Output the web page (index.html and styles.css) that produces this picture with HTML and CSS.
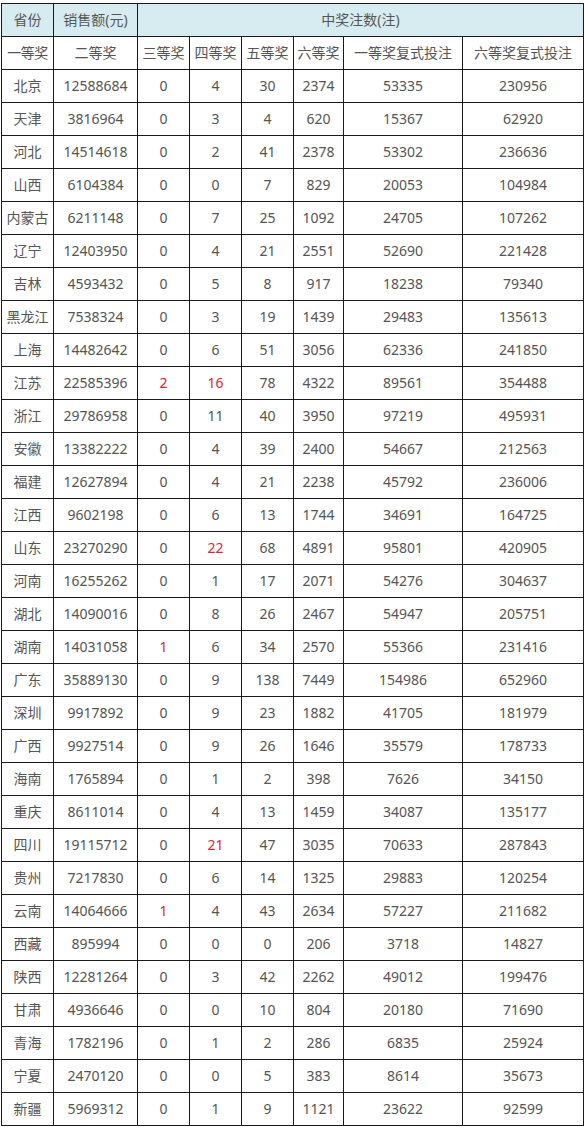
FILE: index.html
```html
<!DOCTYPE html>
<html lang="zh-CN">
<head>
<meta charset="utf-8">
<title>中奖注数</title>
<link rel="stylesheet" href="styles.css">
</head>
<body>
<table class="prize-table">
  <colgroup>
    <col class="c1"><col class="c2"><col class="c3"><col class="c4"><col class="c5"><col class="c6"><col class="c7"><col class="c8">
  </colgroup>
  <thead>
    <tr class="head-main">
      <th>省份</th><th>销售额(元)</th><th colspan="6">中奖注数(注)</th>
    </tr>
    <tr class="head-sub">
      <th class="tight">一等奖</th><th>二等奖</th><th>三等奖</th><th>四等奖</th><th>五等奖</th><th>六等奖</th><th>一等奖复式投注</th><th>六等奖复式投注</th>
    </tr>
  </thead>
  <tbody>
    <tr><td>北京</td><td>12588684</td><td>0</td><td>4</td><td>30</td><td>2374</td><td>53335</td><td>230956</td></tr>
    <tr><td>天津</td><td>3816964</td><td>0</td><td>3</td><td>4</td><td>620</td><td>15367</td><td>62920</td></tr>
    <tr><td>河北</td><td>14514618</td><td>0</td><td>2</td><td>41</td><td>2378</td><td>53302</td><td>236636</td></tr>
    <tr><td>山西</td><td>6104384</td><td>0</td><td>0</td><td>7</td><td>829</td><td>20053</td><td>104984</td></tr>
    <tr><td>内蒙古</td><td>6211148</td><td>0</td><td>7</td><td>25</td><td>1092</td><td>24705</td><td>107262</td></tr>
    <tr><td>辽宁</td><td>12403950</td><td>0</td><td>4</td><td>21</td><td>2551</td><td>52690</td><td>221428</td></tr>
    <tr><td>吉林</td><td>4593432</td><td>0</td><td>5</td><td>8</td><td>917</td><td>18238</td><td>79340</td></tr>
    <tr><td>黑龙江</td><td>7538324</td><td>0</td><td>3</td><td>19</td><td>1439</td><td>29483</td><td>135613</td></tr>
    <tr><td>上海</td><td>14482642</td><td>0</td><td>6</td><td>51</td><td>3056</td><td>62336</td><td>241850</td></tr>
    <tr><td>江苏</td><td>22585396</td><td class="hl">2</td><td class="hl">16</td><td>78</td><td>4322</td><td>89561</td><td>354488</td></tr>
    <tr><td>浙江</td><td>29786958</td><td>0</td><td>11</td><td>40</td><td>3950</td><td>97219</td><td>495931</td></tr>
    <tr><td>安徽</td><td>13382222</td><td>0</td><td>4</td><td>39</td><td>2400</td><td>54667</td><td>212563</td></tr>
    <tr><td>福建</td><td>12627894</td><td>0</td><td>4</td><td>21</td><td>2238</td><td>45792</td><td>236006</td></tr>
    <tr><td>江西</td><td>9602198</td><td>0</td><td>6</td><td>13</td><td>1744</td><td>34691</td><td>164725</td></tr>
    <tr><td>山东</td><td>23270290</td><td>0</td><td class="hl">22</td><td>68</td><td>4891</td><td>95801</td><td>420905</td></tr>
    <tr><td>河南</td><td>16255262</td><td>0</td><td>1</td><td>17</td><td>2071</td><td>54276</td><td>304637</td></tr>
    <tr><td>湖北</td><td>14090016</td><td>0</td><td>8</td><td>26</td><td>2467</td><td>54947</td><td>205751</td></tr>
    <tr><td>湖南</td><td>14031058</td><td class="hl">1</td><td>6</td><td>34</td><td>2570</td><td>55366</td><td>231416</td></tr>
    <tr><td>广东</td><td>35889130</td><td>0</td><td>9</td><td>138</td><td>7449</td><td>154986</td><td>652960</td></tr>
    <tr><td>深圳</td><td>9917892</td><td>0</td><td>9</td><td>23</td><td>1882</td><td>41705</td><td>181979</td></tr>
    <tr><td>广西</td><td>9927514</td><td>0</td><td>9</td><td>26</td><td>1646</td><td>35579</td><td>178733</td></tr>
    <tr><td>海南</td><td>1765894</td><td>0</td><td>1</td><td>2</td><td>398</td><td>7626</td><td>34150</td></tr>
    <tr><td>重庆</td><td>8611014</td><td>0</td><td>4</td><td>13</td><td>1459</td><td>34087</td><td>135177</td></tr>
    <tr><td>四川</td><td>19115712</td><td>0</td><td class="hl">21</td><td>47</td><td>3035</td><td>70633</td><td>287843</td></tr>
    <tr><td>贵州</td><td>7217830</td><td>0</td><td>6</td><td>14</td><td>1325</td><td>29883</td><td>120254</td></tr>
    <tr><td>云南</td><td>14064666</td><td class="hl">1</td><td>4</td><td>43</td><td>2634</td><td>57227</td><td>211682</td></tr>
    <tr><td>西藏</td><td>895994</td><td>0</td><td>0</td><td>0</td><td>206</td><td>3718</td><td>14827</td></tr>
    <tr><td>陕西</td><td>12281264</td><td>0</td><td>3</td><td>42</td><td>2262</td><td>49012</td><td>199476</td></tr>
    <tr><td>甘肃</td><td>4936646</td><td>0</td><td>0</td><td>10</td><td>804</td><td>20180</td><td>71690</td></tr>
    <tr><td>青海</td><td>1782196</td><td>0</td><td>1</td><td>2</td><td>286</td><td>6835</td><td>25924</td></tr>
    <tr><td>宁夏</td><td>2470120</td><td>0</td><td>0</td><td>5</td><td>383</td><td>8614</td><td>35673</td></tr>
    <tr><td>新疆</td><td>5969312</td><td>0</td><td>1</td><td>9</td><td>1121</td><td>23622</td><td>92599</td></tr>
  </tbody>
</table>
</body>
</html>
```
FILE: styles.css
```css
html, body {
  margin: 0;
  padding: 0;
  background: #ffffff;
}

body {
  padding: 3px 0 0 1px;
  font-family: "Noto Sans", "Noto Sans CJK SC", sans-serif;
  font-size: 14px;
  color: #555555;
}

.prize-table {
  border-collapse: collapse;
  table-layout: fixed;
  width: 582px;
}

.c1 { width: 52px; }
.c2 { width: 84px; }
.c3 { width: 52px; }
.c4 { width: 52px; }
.c5 { width: 52px; }
.c6 { width: 50px; }
.c7 { width: 119px; }
.c8 { width: 121px; }

.prize-table th,
.prize-table td {
  border: 1px solid #1a1a1a;
  height: 32px;
  padding: 0;
  text-align: center;
  vertical-align: middle;
  font-weight: normal;
  white-space: nowrap;
  overflow: hidden;
  line-height: 20px;
}

.head-main th {
  background: #d7ecf1;
}

.head-sub th {
  background: #ffffff;
}

.tight {
  letter-spacing: -0.5px;
}

.hl {
  color: #e0252d;
}
```
